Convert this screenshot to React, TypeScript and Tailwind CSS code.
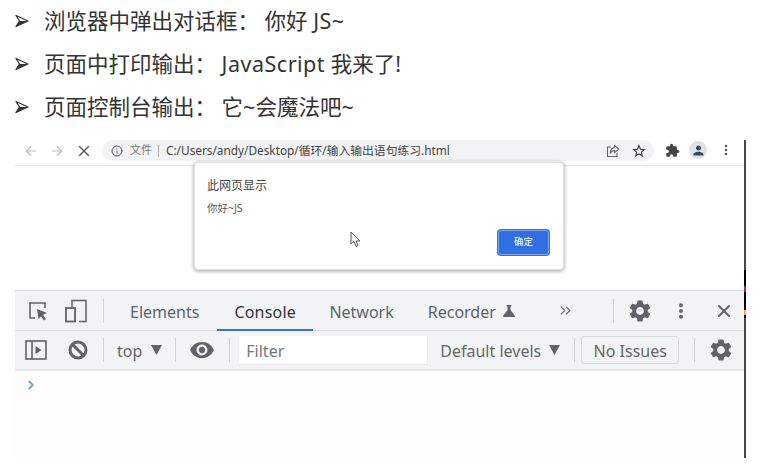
import { ArrowLeft, ArrowRight, X, Info, MoreVertical, ChevronsRight, ChevronRight } from 'lucide-react';
import { MdSettings, MdExtension, MdPerson, MdStarBorder, MdScience, MdRemoveRedEye } from 'react-icons/md';

const cjk = 'font-["Noto_Sans","Noto_Sans_CJK_SC",sans-serif]';

function Bullet({ children, className }: { children: React.ReactNode; className: string }) {
  return (
    <li className={`flex items-center h-[30px] ${className}`}>
      <svg width="14" height="14" viewBox="0 0 14 14" className="ml-[15px] mr-[15px] shrink-0">
        <path d="M1 1.5 L13 7 L1 12.5 L4.5 7 Z" fill="#fff" stroke="#333" strokeWidth="1.3" strokeLinejoin="round" />
        <path d="M4.5 7 L13 7 L1 12.5 Z" fill="#333" />
      </svg>
      <span className="text-[21.5px] leading-[30px] text-[#333] whitespace-pre">{children}</span>
    </li>
  );
}

function Sep({ className }: { className: string }) {
  return <div className={`w-px h-[24px] bg-[#d0d2d4] shrink-0 ${className}`} />;
}

function Caret({ className }: { className: string }) {
  return (
    <svg width="11" height="10" viewBox="0 0 11 10" className={`shrink-0 ${className}`}>
      <path d="M0 0 H11 L5.5 10 Z" fill="#5f6368" />
    </svg>
  );
}

export default function App() {
  return (
    <div className={`w-[767px] h-[465px] bg-white overflow-hidden ${cjk}`}>
      <ul className="pt-[6px]">
        <Bullet className="">浏览器中弹出对话框： 你好 <span className="tracking-[0.5px]">JS~</span></Bullet>
        <Bullet className="mt-[13px]">页面中打印输出： <span className="tracking-[0.5px]">JavaScript</span> 我来了!</Bullet>
        <Bullet className="mt-[13px]">页面控制台输出： 它~会魔法吧~</Bullet>
      </ul>

      <div className="relative ml-[15px] mt-[18px] w-[731px] h-[318px] border-r-2 border-[#45484b] flex flex-col">
        {/* Browser toolbar */}
        <div className="h-[26px] shrink-0 flex items-start border-b border-[#e3e5e7] text-[#5f6368]">
          <ArrowLeft className="w-[16px] h-[16px] mt-[3px] ml-[8px] text-[#b4b7bb]" strokeWidth={1.6} />
          <ArrowRight className="w-[16px] h-[16px] mt-[3px] ml-[10px] text-[#b4b7bb]" strokeWidth={1.6} />
          <X className="w-[18px] h-[18px] mt-[2px] ml-[10px] text-[#5f6368]" strokeWidth={2} />
          <div className="ml-[9px] w-[552px] h-[21px] rounded-full bg-[#f1f3f4] flex items-center">
            <Info className="w-[12px] h-[12px] ml-[9px] text-[#444]" strokeWidth={1.8} />
            <span className="ml-[7px] text-[11px] text-[#777]">文件</span>
            <div className="ml-[6px] w-px h-[12px] bg-[#aaa]" />
            <span className="ml-[7px] text-[11.8px] text-[#444] whitespace-nowrap">C:/Users/andy/Desktop/循环/输入输出语句练习.html</span>
            <svg width="14" height="14" viewBox="0 0 14 14" className="ml-auto shrink-0" fill="none" stroke="#666" strokeWidth="1.1">
              <path d="M5 3 H1.5 V12.5 H11 V9" />
              <path d="M8.5 1.5 L12.8 5 L8.5 8.5 V6.5 C6.5 6.5 5 7.5 4.2 9.5 C4.2 6.5 6 4 8.5 3.5 Z" />
            </svg>
            <MdStarBorder className="w-[16px] h-[16px] ml-[11px] mr-[7px] text-[#333]" />
          </div>
          <MdExtension className="w-[15px] h-[15px] mt-[3px] ml-[11px] text-[#444]" />
          <div className="w-[18px] h-[18px] ml-[9px] mt-[1px] rounded-full bg-[#dfe1e8] flex items-center justify-center">
            <MdPerson className="w-[15px] h-[15px] text-[#3c4a5c]" />
          </div>
          <MoreVertical className="w-[14px] h-[14px] mt-[3px] ml-[12px] text-[#555]" strokeWidth={2.4} />
        </div>

        {/* Page area */}
        <div className="h-[124px] shrink-0" />

        {/* DevTools tabs */}
        <div className="h-[41px] shrink-0 flex items-center bg-[#f1f3f4] border-t border-b border-[#dadce0] text-[#5f6368] text-[16px]">
          <svg width="20" height="20" viewBox="0 0 20 20" className="ml-[13px] shrink-0" fill="none">
            <path d="M7 17 H2 V2 H17 V7" stroke="#5f6368" strokeWidth="1.6" />
            <path d="M9 8 L19 12 L15 14 L18 18 L16 19.5 L13 15.5 L10.5 18 Z" fill="#5f6368" />
          </svg>
          <svg width="22" height="24" viewBox="0 0 22 24" className="ml-[17px] shrink-0" fill="none">
            <path d="M7 9 V1.5 H21 V22.5 H14" stroke="#5f6368" strokeWidth="1.5" />
            <rect x="1" y="9" width="9" height="13.5" stroke="#5f6368" strokeWidth="1.8" />
          </svg>
          <Sep className="ml-[16px]" />
          <span className="ml-[26px] pt-[2px]">Elements</span>
          <div className="relative ml-[18px] w-[96px] h-full flex items-center pl-[17px] pt-[2px] text-[#333] tracking-[0.2px]">
            Console
            <div className="absolute left-0 right-0 bottom-[-1px] h-[2px] bg-[#3a75c9]" />
          </div>
          <span className="ml-[16px] pt-[2px]">Network</span>
          <span className="ml-[34px] pt-[2px]">Recorder</span>
          <MdScience className="w-[18px] h-[18px] ml-[4px] text-[#5f6368]" />
          <ChevronsRight className="w-[17px] h-[17px] ml-[39px] text-[#777]" strokeWidth={1.8} />
          <Sep className="ml-[39px]" />
          <MdSettings className="w-[26px] h-[26px] ml-[13px] text-[#5f6368]" />
          <MoreVertical className="w-[20px] h-[20px] ml-[18px] text-[#5f6368]" strokeWidth={2.8} />
          <X className="w-[20px] h-[20px] ml-[23px] text-[#5f6368]" strokeWidth={2.4} />
        </div>

        {/* Console toolbar */}
        <div className="h-[40px] shrink-0 flex items-center bg-[#f1f3f4] border-b-2 border-[#e4e6e8] text-[#666] text-[16px]">
          <svg width="22" height="20" viewBox="0 0 22 20" className="ml-[10px] shrink-0" fill="none">
            <rect x="1" y="1" width="20" height="18" stroke="#5f6368" strokeWidth="1.6" />
            <path d="M7 1 V19" stroke="#5f6368" strokeWidth="1.6" />
            <path d="M10.5 6 L16.5 10 L10.5 14 Z" fill="#5f6368" />
          </svg>
          <svg width="20" height="20" viewBox="0 0 20 20" className="ml-[21px] shrink-0" fill="none" stroke="#5f6368" strokeWidth="3">
            <circle cx="10" cy="10" r="8" />
            <path d="M4.5 4.5 L15.5 15.5" />
          </svg>
          <Sep className="ml-[15px]" />
          <span className="ml-[13px] pt-[2px]">top</span>
          <Caret className="ml-[9px]" />
          <Sep className="ml-[13px]" />
          <MdRemoveRedEye className="w-[26px] h-[26px] ml-[13px] text-[#5f6368]" />
          <Sep className="ml-[14px]" />
          <div className="ml-[9px] w-[189px] h-[29px] bg-white flex items-center pl-[7px] pt-[3px] border-b border-r border-[#e8e8e8] text-[#777]">Filter</div>
          <span className="ml-[12px] pt-[2px]">Default levels</span>
          <Caret className="ml-[8px]" />
          <Sep className="ml-[14px]" />
          <div className="ml-[6px] w-[98px] h-[28px] rounded-[3px] border border-[#d6d8da] flex items-center justify-center pt-[2px]">No Issues</div>
          <Sep className="ml-[15px]" />
          <MdSettings className="w-[26px] h-[26px] ml-[13px] text-[#5f6368]" />
        </div>

        {/* Console body */}
        <div className="flex-1 bg-[#fdfdfd] pt-[7px]">
          <ChevronRight className="w-[14px] h-[14px] ml-[9px] text-[#7f9fd8]" strokeWidth={3.4} />
        </div>

        {/* alert() dialog */}
        <div className="absolute left-[179px] top-[22px] w-[370px] h-[108px] bg-white rounded-[4px] border border-[#e0e0e0] shadow-[0_1px_4px_rgba(0,0,0,0.4)] flex flex-col pl-[12px] pr-[14px]">
          <div className="mt-[14px] text-[12px] leading-[17px] text-[#444]">此网页显示</div>
          <div className="mt-[6px] text-[10.5px] leading-[16px] text-[#555]">你好~JS</div>
          <div className="mt-auto mb-[14px] self-end w-[51px] h-[25px] rounded-[3px] bg-[#2f6fe0] border border-[#7ea6ee] shadow-[0_0_0_1px_#2f6fe0] flex items-center justify-center text-[9.5px] text-white">确定</div>
        </div>

        {/* Mouse pointer */}
        <svg width="12" height="17" viewBox="0 0 12 17" className="absolute left-[335px] top-[91px]">
          <path d="M1 1 V13 L4 10.5 L6 15.5 L8 14.5 L6 10 H10 Z" fill="#fff" stroke="#555" strokeWidth="1" strokeLinejoin="round" />
        </svg>

        {/* Desktop showing past the window edge */}
        <div className="absolute right-[-2px] top-[130px] w-[2px] h-[48px] flex flex-col bg-black">
          <div className="mt-[16px] h-[6px] bg-[#b02050]" />
          <div className="mt-[18px] h-[5px] bg-[#d8b060]" />
        </div>
      </div>
    </div>
  );
}
